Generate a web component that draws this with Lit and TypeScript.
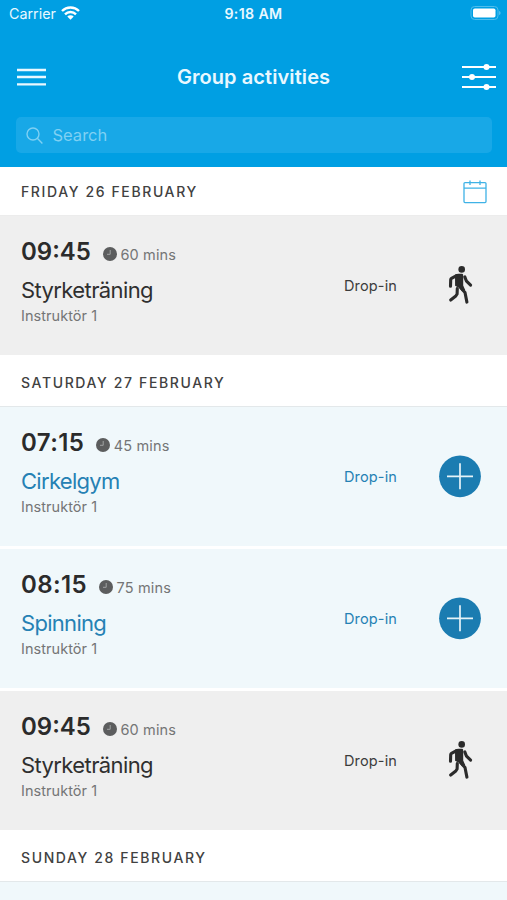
import { LitElement, html, css, svg } from "lit";
import { customElement, property } from "lit/decorators.js";
import { classMap } from "lit/directives/class-map.js";

interface Activity {
  time: string;
  mins: number;
  name: string;
  instructor: string;
  bookable: boolean;
}

interface Day {
  label: string;
  calendar?: boolean;
  activities: Activity[];
}

const strength: Activity = { time: "09:45", mins: 60, name: "Styrketräning", instructor: "Instruktör 1", bookable: false };

const days: Day[] = [
  { label: "Friday 26 February", calendar: true, activities: [strength] },
  {
    label: "Saturday 27 February",
    activities: [
      { time: "07:15", mins: 45, name: "Cirkelgym", instructor: "Instruktör 1", bookable: true },
      { time: "08:15", mins: 75, name: "Spinning", instructor: "Instruktör 1", bookable: true },
      strength,
    ],
  },
  { label: "Sunday 28 February", activities: [] },
];

const clockIcon = svg`<svg class="clock" width="14" height="14" viewBox="0 0 14 14">
  <circle cx="7" cy="7" r="7" fill="#5c5d5e"/>
  <path d="M7.200 3v4.300H4" fill="none" stroke="#a0a2a3" stroke-width="1"/>
</svg>`;

const walkIcon = svg`<svg width="42" height="42" viewBox="0 0 42 42">
  <circle cx="22.700" cy="5.400" r="3.300" fill="#2b2b2b"/>
  <path d="M16 10.700q1.500-.9 3.500-.9h3.700q1 .2 1 1.400V21.500l2 4.500-3 1.500-3-3.500-4.100-2.200z" fill="#2b2b2b"/>
  <g fill="none" stroke="#2b2b2b" stroke-width="3.100" stroke-linecap="round" stroke-linejoin="round">
    <path d="M17.500 11.700l-5 2.700q-.7.400-.8 1.300l-.2 6.500"/>
    <path d="M25.800 12.900l1.700 4.300 4.100 4"/>
    <path d="M21.600 23.500l4.400 5 1.900 9.600"/>
    <path d="M18.300 24.500l-.2 5.500-1.300 2-5.100 4"/>
  </g>
</svg>`;

const plusIcon = svg`<svg width="42" height="42" viewBox="0 0 42 42">
  <circle cx="21" cy="21.300" r="20.900" fill="#1b7cb1"/>
  <path d="M21 8.300v26M8 21.300h26" stroke="#e6f3f8" stroke-width="1.700"/>
</svg>`;

const calendarIcon = svg`<svg width="24" height="24" viewBox="0 0 24 24" fill="none" stroke="#3fb2e6" stroke-width="1.300">
  <rect x="1" y="2.600" width="22" height="20" rx="1"/>
  <path d="M1 8.200h22M7 .500v4.500M17 .500v4.500"/>
</svg>`;

@customElement("activity-row")
export class ActivityRow extends LitElement {
  @property({ attribute: false }) activity!: Activity;

  static styles = css`
    :host { display: block; }
    .row { height: 139px; box-sizing: border-box; display: flex; padding: 0 26px 0 21px; background: #efefef; color: #2f2f2f; }
    .row.bookable { background: #f0f8fb; }
    .info { flex: 1; padding-top: 20px; }
    .when { display: flex; height: 32px; }
    .time { font-size: 24px; font-weight: 600; line-height: 32px; color: #2b2b2b; }
    .bookable .time { letter-spacing: 0.4px; }
    .clock { margin: 11px 3.5px 0 12px; }
    .mins { font-size: 14.5px; line-height: 32px; padding-top: 3px; color: #747576; letter-spacing: 0.15px; }
    .name { font-size: 22px; line-height: 30px; margin-top: 7px; letter-spacing: -0.6px; }
    .bookable .name { letter-spacing: -0.7px; }
    .who { font-size: 14.5px; line-height: 20px; margin-top: 1px; color: #747576; letter-spacing: 0.05px; }
    .kind { width: 95px; font-size: 14.5px; line-height: 139px; letter-spacing: 0.15px; color: #3c3c3c; }
    .action { padding-top: 48px; height: 42px; }
    .action svg { display: block; overflow: visible; }
    .bookable .name, .bookable .kind { color: #2581b4; }
  `;

  render() {
    const a = this.activity;
    return html`<div class=${classMap({ row: true, bookable: a.bookable })}>
      <div class="info">
        <div class="when"><span class="time">${a.time}</span>${clockIcon}<span class="mins">${a.mins} mins</span></div>
        <div class="name">${a.name}</div>
        <div class="who">${a.instructor}</div>
      </div>
      <div class="kind">Drop-in</div>
      <div class="action">${a.bookable ? plusIcon : walkIcon}</div>
    </div>`;
  }
}

@customElement("app-root")
export class AppRoot extends LitElement {
  static styles = css`
    :host { display: flex; flex-direction: column; height: 900px; overflow: hidden; background: #fff; font-family: Inter, "Liberation Sans", sans-serif; }
    .top { height: 167px; background: #009fe3; color: #e9f8ff; }
    .status { height: 28px; display: grid; grid-template-columns: 1fr auto 1fr; line-height: 28px; font-size: 14.3px; }
    .carrier { display: flex; padding-left: 9px; gap: 5px; }
    .carrier svg { margin-top: 6px; }
    .clocktime { font-weight: 600; font-size: 14.2px; letter-spacing: 0.35px; }
    .battery { justify-self: end; padding: 6px 6px 0 0; line-height: 0; }
    .nav { height: 89px; display: grid; grid-template-columns: 1fr auto 1fr; align-items: center; padding: 9px 11px 0; box-sizing: border-box; }
    .title { font-size: 20px; font-weight: 600; letter-spacing: 0.08px; }
    .nav svg { display: block; }
    .menu { margin-left: 5.5px; }
    .filter { justify-self: end; }
    .search { height: 36px; margin: 0 15px 0 16px; display: flex; align-items: center; border-radius: 5px; background: #18a8e7; color: #7fd0f3; font-size: 16.5px; gap: 9.5px; padding-left: 10px; box-sizing: border-box; }
    .day { flex: none; height: 52px; box-sizing: border-box; padding: 3px 19px 0 21px; display: flex; align-items: center; justify-content: space-between; border-bottom: 1px solid #e3e8ea; color: #414141; font-size: 14px; font-weight: 500; text-transform: uppercase; letter-spacing: 1.62px; }
    .day.first { height: 49px; padding: 1px 20px 0 21px; border-bottom-color: #ececec; }
    .list { display: grid; gap: 3px; }
    .rest { flex: 1; background: #f0f8fb; }
  `;

  render() {
    return html`
      <div class="top">
        <div class="status">
          <div class="carrier"><span class="cname">Carrier</span>
            <svg width="19" height="14" viewBox="0 0 19 14"><g fill="none" stroke="#fff" stroke-width="2.400"><path d="M1 5a12.200 12.200 0 0 1 17 0"/><path d="M4 8.300a7.800 7.800 0 0 1 11 0"/></g><path d="M6.300 10.500a4.600 4.600 0 0 1 6.400 0L9.500 13.800z" fill="#fff"/></svg>
          </div>
          <div class="clocktime">9:18 AM</div>
          <div class="battery"><svg width="31" height="14" viewBox="0 0 31 14"><rect x="1" y=".500" width="27" height="13" rx="3.600" fill="none" stroke="#4fbdec"/><rect x="3" y="2.500" width="22.500" height="9" rx="1.800" fill="#fff"/><path d="M29 5v4c1-.3 1.600-1 1.600-2S30 5.300 29 5z" fill="#4fbdec"/></svg></div>
        </div>
        <div class="nav">
          <svg class="menu" width="29" height="18" viewBox="0 0 29 18"><path d="M0 2h29M0 9h29M0 16.400h29" stroke="#e9f8ff" stroke-width="2.400"/></svg>
          <div class="title">Group activities</div>
          <svg class="filter" width="34" height="26" viewBox="0 0 34 26"><path d="M0 3h34M0 13h34M0 23h34" stroke="#fff" stroke-width="2.200"/><g fill="#fff"><circle cx="24.500" cy="3" r="3"/><circle cx="10" cy="13" r="3"/><circle cx="24.500" cy="23" r="3"/></g></svg>
        </div>
        <div class="search">
          <svg width="17" height="17" viewBox="0 0 17 17" fill="none" stroke="#7fd0f3" stroke-width="1.400"><circle cx="7" cy="7" r="6"/><path d="M11.300 11.300L16.400 16.400"/></svg>
          <span class="hint">Search</span>
        </div>
      </div>
      ${days.map((d) => html`
        <div class=${classMap({ day: true, first: !!d.calendar })}><span>${d.label}</span>${d.calendar ? calendarIcon : ""}</div>
        <div class="list">${d.activities.map((a) => html`<activity-row .activity=${a}></activity-row>`)}</div>`)}
      <div class="rest"></div>
    `;
  }
}
